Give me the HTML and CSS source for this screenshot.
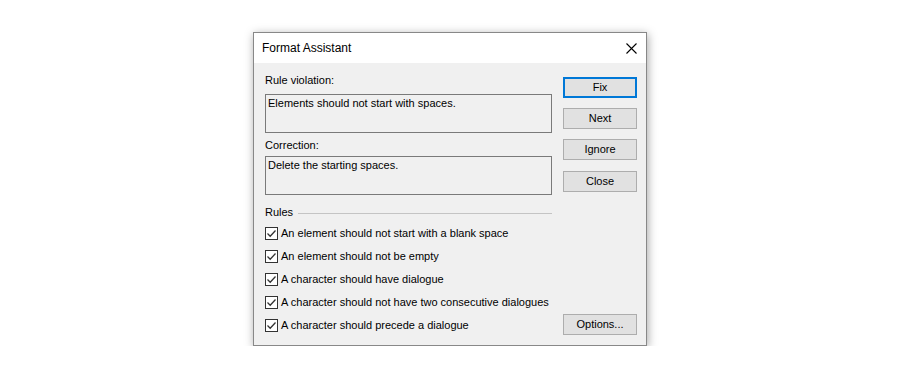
FILE: index.html
```html
<!DOCTYPE html>
<html lang="en">
<head>
  <meta charset="UTF-8" />
  <title>Format Assistant</title>
  <link rel="stylesheet" href="styles.css">
</head>
<body>
  <div class="page">
    <div class="dialog">
      <div class="titlebar">
        <span class="title">Format Assistant</span>
        <svg class="close" width="11" height="11" viewBox="0 0 11 11">
          <path d="M0.5 0.5 L10.5 10.5 M10.5 0.5 L0.5 10.5" stroke="#000" stroke-width="1.1" fill="none"/>
        </svg>
      </div>

      <div class="content">
        <!-- Left column -->
        <div class="main">
          <div class="label first">Rule violation:</div>
          <div class="textbox">Elements should not start with spaces.</div>
          <div class="label second">Correction:</div>
          <div class="textbox tb2">Delete the starting spaces.</div>

          <div class="group"><span>Rules</span><span class="group-line"></span></div>
          <ul class="rules">
            <li><span class="check"><svg width="11" height="11" viewBox="0 0 11 11"><path d="M1.5 5.5 L4.2 8.2 L9.5 2.5" stroke="#333" stroke-width="1.3" fill="none"/></svg></span>An element should not start with a blank space</li>
            <li><span class="check"><svg width="11" height="11" viewBox="0 0 11 11"><path d="M1.5 5.5 L4.2 8.2 L9.5 2.5" stroke="#333" stroke-width="1.3" fill="none"/></svg></span>An element should not be empty</li>
            <li><span class="check"><svg width="11" height="11" viewBox="0 0 11 11"><path d="M1.5 5.5 L4.2 8.2 L9.5 2.5" stroke="#333" stroke-width="1.3" fill="none"/></svg></span>A character should have dialogue</li>
            <li><span class="check"><svg width="11" height="11" viewBox="0 0 11 11"><path d="M1.5 5.5 L4.2 8.2 L9.5 2.5" stroke="#333" stroke-width="1.3" fill="none"/></svg></span>A character should not have two consecutive dialogues</li>
            <li><span class="check"><svg width="11" height="11" viewBox="0 0 11 11"><path d="M1.5 5.5 L4.2 8.2 L9.5 2.5" stroke="#333" stroke-width="1.3" fill="none"/></svg></span>A character should precede a dialogue</li>
          </ul>
        </div>

        <!-- Buttons -->
        <div class="buttons">
          <button class="btn default">Fix</button>
          <button class="btn next">Next</button>
          <button class="btn ignore">Ignore</button>
          <button class="btn close-btn">Close</button>
          <button class="btn options">Options...</button>
        </div>
      </div>
    </div>
  </div>
</body>
</html>
```

FILE: styles.css
```css
body        {margin:0; background:#fff; font-family:"Liberation Sans", Arial, sans-serif; font-size:11px; color:#000;}
.page       {padding:32px 0 0 253px;}
.dialog     {width:394px; height:314px; box-sizing:border-box; border:1px solid #888; background:#f0f0f0; box-shadow:1px 2px 9px rgba(0,0,0,0.35); display:flex; flex-direction:column;}

.titlebar   {height:30px; flex-shrink:0; background:#fff; display:flex; align-items:center; justify-content:space-between; padding:0 9px 0 8px;}
.title      {font-size:12px; margin-top:-1px;}
.close      {display:block; margin-top:1px;}

.content    {flex:1; min-height:0; display:flex; gap:11px; padding:11px 9px 10px 11px;}
.main       {width:287px; display:flex; flex-direction:column;}
.label      {line-height:13px;}
.second     {margin-top:6px;}
.textbox    {height:39px; flex-shrink:0; box-sizing:border-box; border:1px solid #7a7a7a; padding:2px 2px; line-height:13px; margin-top:7px;}
.tb2        {margin-top:4px;}

.group      {display:flex; align-items:center; margin-top:11px; line-height:13px;}
.group-line {flex:1; height:1px; background:#c4c4c4; margin:1px 0 0 5px;}

.rules      {list-style:none; margin:3px 0 0; padding:0;}
.rules li   {height:23px; display:flex; align-items:center; line-height:13px;}
.check      {width:13px; height:13px; box-sizing:border-box; border:1px solid #333; background:#fff; margin-right:3px; display:flex;}
.check svg  {display:block;}

.buttons    {width:74px; display:flex; flex-direction:column;}
.btn        {height:21px; flex-shrink:0; box-sizing:border-box; background:#e1e1e1; border:1px solid #adadad; padding:0; font:inherit; color:#000; line-height:17px;}
.default    {border:2px solid #0078d7; margin-top:3px;}
.next       {margin-top:10px;}
.ignore     {margin-top:10px;}
.close-btn  {margin-top:11px;}
.options    {margin-top:auto;}
```
